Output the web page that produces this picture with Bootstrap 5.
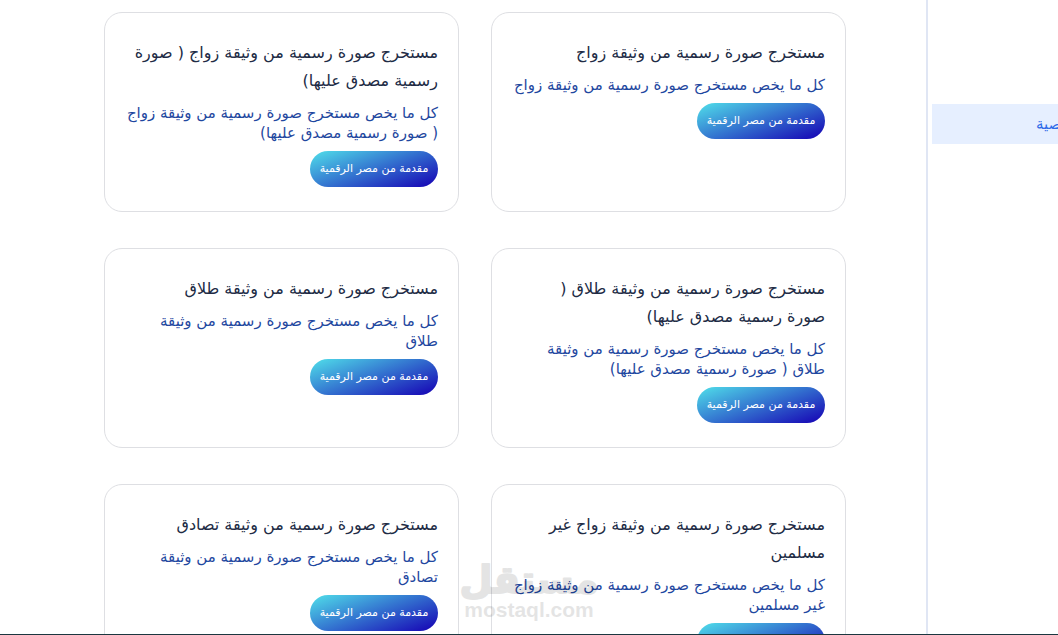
<!DOCTYPE html>
<html lang="ar" dir="rtl">
<head>
<meta charset="utf-8">
<meta name="viewport" content="width=device-width, initial-scale=1">
<title>مستخرجات رسمية</title>
<link href="https://cdn.jsdelivr.net/npm/bootstrap@5.3.0/dist/css/bootstrap.min.css" rel="stylesheet">
<style>
  body { font-family: "DejaVu Sans", sans-serif; background: #fff; }
  .side-menu { width: 132px; border-left: 2px solid #e0e6f4; padding: 104px 0 0 4px; }
  .side-link { height: 40px; padding-left: 104px; background: #e6efff; color: #2f6be8; font-size: 15px; }
  .services { display: grid; grid-template-columns: 1fr 1fr; grid-auto-rows: 200px; gap: 36px 32px; padding: 12px 80px 0 104px; }
  .service { border: 1px solid #dedfe3; border-radius: 18px; padding: 26px 20px 24px; }
  .service-title { font-size: 16px; line-height: 28px; color: #212b45; font-weight: 400; }
  .service-text { font-size: 15px; line-height: 20px; color: #1f48a0; white-space: nowrap; }
  .provider { width: 128px; height: 36px; font-size: 11px; color: #fff; background: linear-gradient(160deg, #50e0ea 0%, #1a12b8 92%); }
  .provider:hover { color: #fff; }
  .watermark { left: 464px; bottom: 12px; width: 130px; color: #000; opacity: .1; overflow: visible; }
  .taskbar-edge { height: 1px; background: #1b3740; }
</style>
</head>
<body>
<div class="d-flex vh-100 overflow-hidden position-relative">
  <aside class="side-menu flex-shrink-0">
    <a href="#" class="side-link d-flex align-items-center justify-content-end text-nowrap text-decoration-none overflow-hidden">&zwj;صية</a>
  </aside>
  <main class="services flex-grow-1">
    <article class="service">
      <h2 class="service-title mb-2">مستخرج صورة رسمية من وثيقة زواج</h2>
      <p class="service-text mb-2">كل ما يخص مستخرج صورة رسمية من وثيقة زواج</p>
      <button type="button" class="provider btn rounded-pill border-0 p-0 text-nowrap">مقدمة من مصر الرقمية</button>
    </article>
    <article class="service">
      <h2 class="service-title mb-2">مستخرج صورة رسمية من وثيقة زواج ( صورة<br>رسمية مصدق عليها)</h2>
      <p class="service-text mb-2">كل ما يخص مستخرج صورة رسمية من وثيقة زواج<br>( صورة رسمية مصدق عليها)</p>
      <button type="button" class="provider btn rounded-pill border-0 p-0 text-nowrap">مقدمة من مصر الرقمية</button>
    </article>
    <article class="service">
      <h2 class="service-title mb-2">مستخرج صورة رسمية من وثيقة طلاق (<br>صورة رسمية مصدق عليها)</h2>
      <p class="service-text mb-2">كل ما يخص مستخرج صورة رسمية من وثيقة<br>طلاق ( صورة رسمية مصدق عليها)</p>
      <button type="button" class="provider btn rounded-pill border-0 p-0 text-nowrap">مقدمة من مصر الرقمية</button>
    </article>
    <article class="service">
      <h2 class="service-title mb-2">مستخرج صورة رسمية من وثيقة طلاق</h2>
      <p class="service-text mb-2">كل ما يخص مستخرج صورة رسمية من وثيقة<br>طلاق</p>
      <button type="button" class="provider btn rounded-pill border-0 p-0 text-nowrap">مقدمة من مصر الرقمية</button>
    </article>
    <article class="service">
      <h2 class="service-title mb-2">مستخرج صورة رسمية من وثيقة زواج غير<br>مسلمين</h2>
      <p class="service-text mb-2">كل ما يخص مستخرج صورة رسمية من وثيقة زواج<br>غير مسلمين</p>
      <button type="button" class="provider btn rounded-pill border-0 p-0 text-nowrap">مقدمة من مصر الرقمية</button>
    </article>
    <article class="service">
      <h2 class="service-title mb-2">مستخرج صورة رسمية من وثيقة تصادق</h2>
      <p class="service-text mb-2">كل ما يخص مستخرج صورة رسمية من وثيقة<br>تصادق</p>
      <button type="button" class="provider btn rounded-pill border-0 p-0 text-nowrap">مقدمة من مصر الرقمية</button>
    </article>
  </main>
  <svg class="watermark position-absolute pe-none" viewBox="0 0 130 62" fill="currentColor" aria-hidden="true">
    <text x="65" y="32" text-anchor="middle" font-family="DejaVu Sans, sans-serif" font-weight="700" font-size="38" stroke="currentColor" stroke-width="2" stroke-linejoin="round">مستقل</text>
    <text x="65" y="56" text-anchor="middle" direction="ltr" font-family="Liberation Sans, sans-serif" font-weight="700" font-size="21">mostaql.com</text>
  </svg>
  <div class="taskbar-edge position-absolute bottom-0 start-0 end-0"></div>
</div>
<script src="https://cdn.jsdelivr.net/npm/bootstrap@5.3.0/dist/js/bootstrap.bundle.min.js"></script>
</body>
</html>
